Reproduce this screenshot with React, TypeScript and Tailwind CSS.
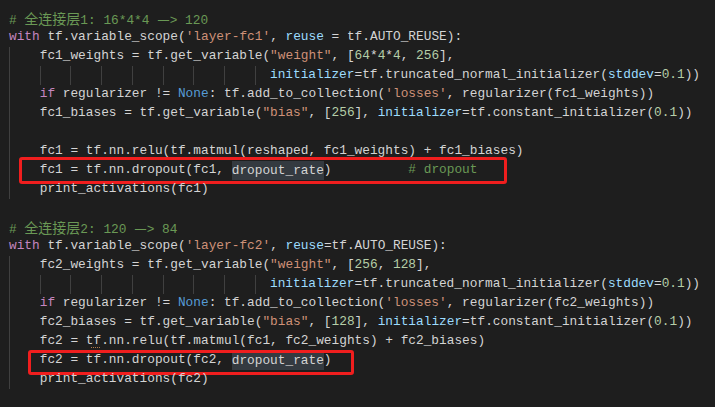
import type { ReactNode } from 'react';

// VS Code Dark+ palette
const C = {
  txt: 'text-[#d4d4d4]',
  kw: 'text-[#c586c0]',
  con: 'text-[#569cd6]',
  str: 'text-[#ce9178]',
  num: 'text-[#b5cea8]',
  arg: 'text-[#9cdcfe]',
  com: 'text-[#6a9955]',
};

type Tok = [string, string?];

function Guides({ n, tail = false }: { n: number; tail?: boolean }) {
  return (
    <>
      {Array.from({ length: n }).map((_, i) => (
        <span key={i} className="inline-block h-full w-[4ch] shrink-0 border-l border-[#404040]" />
      ))}
      {tail && <span className="inline-block h-full w-[2ch] shrink-0 border-l border-[#404040]" />}
    </>
  );
}

function Line({ guides = 0, tail = false, toks = [], children }: { guides?: number; tail?: boolean; toks?: Tok[]; children?: ReactNode }) {
  return (
    <div className="relative flex h-[19px] items-center whitespace-pre">
      <Guides n={guides} tail={tail} />
      {toks.map(([t, c], i) => (
        <span key={i} className={c ?? C.txt}>{t}</span>
      ))}
      {children}
    </div>
  );
}

const cjk = "font-['Noto_Sans_CJK_SC',sans-serif] text-[14px] leading-[19px]";

function Heading({ n, rest }: { n: string; rest: string }) {
  const [a, b] = rest.split('—');
  return (
    <div className={`h-[19px] overflow-hidden whitespace-pre leading-[19px] ${C.com}`}>
      # <span className={cjk}>全连接层</span>
      {n}: {a}
      <span className={cjk}>—</span>
      {b}
    </div>
  );
}

function Dropout({ fc, boxClass, comment }: { fc: string; boxClass: string; comment?: boolean }) {
  return (
    <Line guides={1}>
      <span className={C.txt}>{`${fc} = tf.nn.dropout(${fc}, `}</span>
      <span className="bg-[#343a40] text-[#d4d4d4] leading-[19px]">dropout_rate</span>
      <span className={C.txt}>)</span>
      {comment && <span className={C.com}>{'          # dropout'}</span>}
      <div className={`absolute rounded-[3px] border-[3px] border-[#f01e1e] ${boxClass}`} />
    </Line>
  );
}

export default function App() {
  return (
    <div className="h-[407px] w-[715px] overflow-hidden bg-[#1e1e1e] pl-[9px] pt-[8.5px] font-['Liberation_Mono','Noto_Sans_CJK_SC',monospace] text-[12.8px] text-[#d4d4d4]">
      <Heading n="1" rest="16*4*4 —> 120" />
      <Line
        toks={[
          ['with', C.kw],
          [' tf.variable_scope('],
          ["'layer-fc1'", C.str],
          [', '],
          ['reuse', C.arg],
          [' = tf.AUTO_REUSE):'],
        ]}
      />
      <Line
        guides={1}
        toks={[
          ['fc1_weights = tf.get_variable('],
          ['"weight"', C.str],
          [', ['],
          ['64', C.num],
          ['*'],
          ['4', C.num],
          ['*'],
          ['4', C.num],
          [', '],
          ['256', C.num],
          ['],'],
        ]}
      />
      <Line
        guides={8}
        tail
        toks={[
          ['initializer', C.arg],
          ['=tf.truncated_normal_initializer('],
          ['stddev', C.arg],
          ['='],
          ['0.1', C.num],
          ['))'],
        ]}
      />
      <Line
        guides={1}
        toks={[
          ['if', C.kw],
          [' regularizer != '],
          ['None', C.con],
          [': tf.add_to_collection('],
          ["'losses'", C.str],
          [', regularizer(fc1_weights))'],
        ]}
      />
      <Line
        guides={1}
        toks={[
          ['fc1_biases = tf.get_variable('],
          ['"bias"', C.str],
          [', ['],
          ['256', C.num],
          ['], '],
          ['initializer', C.arg],
          ['=tf.constant_initializer('],
          ['0.1', C.num],
          ['))'],
        ]}
      />
      <Line guides={1} />
      <Line guides={1} toks={[['fc1 = tf.nn.relu(tf.matmul(reshaped, fc1_weights) + fc1_biases)']]}>
        <span className="absolute left-[82px] top-[15px] h-px w-[9px] border-b border-dotted border-[#8a8a8a]" />
      </Line>
      <Dropout fc="fc1" comment boxClass="left-[10px] top-[-3.5px] h-[27px] w-[488px]" />
      <Line guides={1} toks={[['print_activations(fc1)']]} />
      <Line />
      <Heading n="2" rest="120 —> 84" />
      <Line
        toks={[
          ['with', C.kw],
          [' tf.variable_scope('],
          ["'layer-fc2'", C.str],
          [', '],
          ['reuse', C.arg],
          ['=tf.AUTO_REUSE):'],
        ]}
      />
      <Line
        guides={1}
        toks={[
          ['fc2_weights = tf.get_variable('],
          ['"weight"', C.str],
          [', ['],
          ['256', C.num],
          [', '],
          ['128', C.num],
          ['],'],
        ]}
      />
      <Line
        guides={8}
        tail
        toks={[
          ['initializer', C.arg],
          ['=tf.truncated_normal_initializer('],
          ['stddev', C.arg],
          ['='],
          ['0.1', C.num],
          ['))'],
        ]}
      />
      <Line
        guides={1}
        toks={[
          ['if', C.kw],
          [' regularizer != '],
          ['None', C.con],
          [': tf.add_to_collection('],
          ["'losses'", C.str],
          [', regularizer(fc2_weights))'],
        ]}
      />
      <Line
        guides={1}
        toks={[
          ['fc2_biases = tf.get_variable('],
          ['"bias"', C.str],
          [', ['],
          ['128', C.num],
          ['], '],
          ['initializer', C.arg],
          ['=tf.constant_initializer('],
          ['0.1', C.num],
          ['))'],
        ]}
      />
      <Line guides={1} toks={[['fc2 = tf.nn.relu(tf.matmul(fc1, fc2_weights) + fc2_biases)']]}>
        <span className="absolute left-[82px] top-[15px] h-px w-[9px] border-b border-dotted border-[#b07a4a]" />
      </Line>
      <Dropout fc="fc2" boxClass="left-[19px] top-[-0.5px] h-[25px] w-[326px]" />
      <Line guides={1} toks={[['print_activations(fc2)']]} />
    </div>
  );
}
